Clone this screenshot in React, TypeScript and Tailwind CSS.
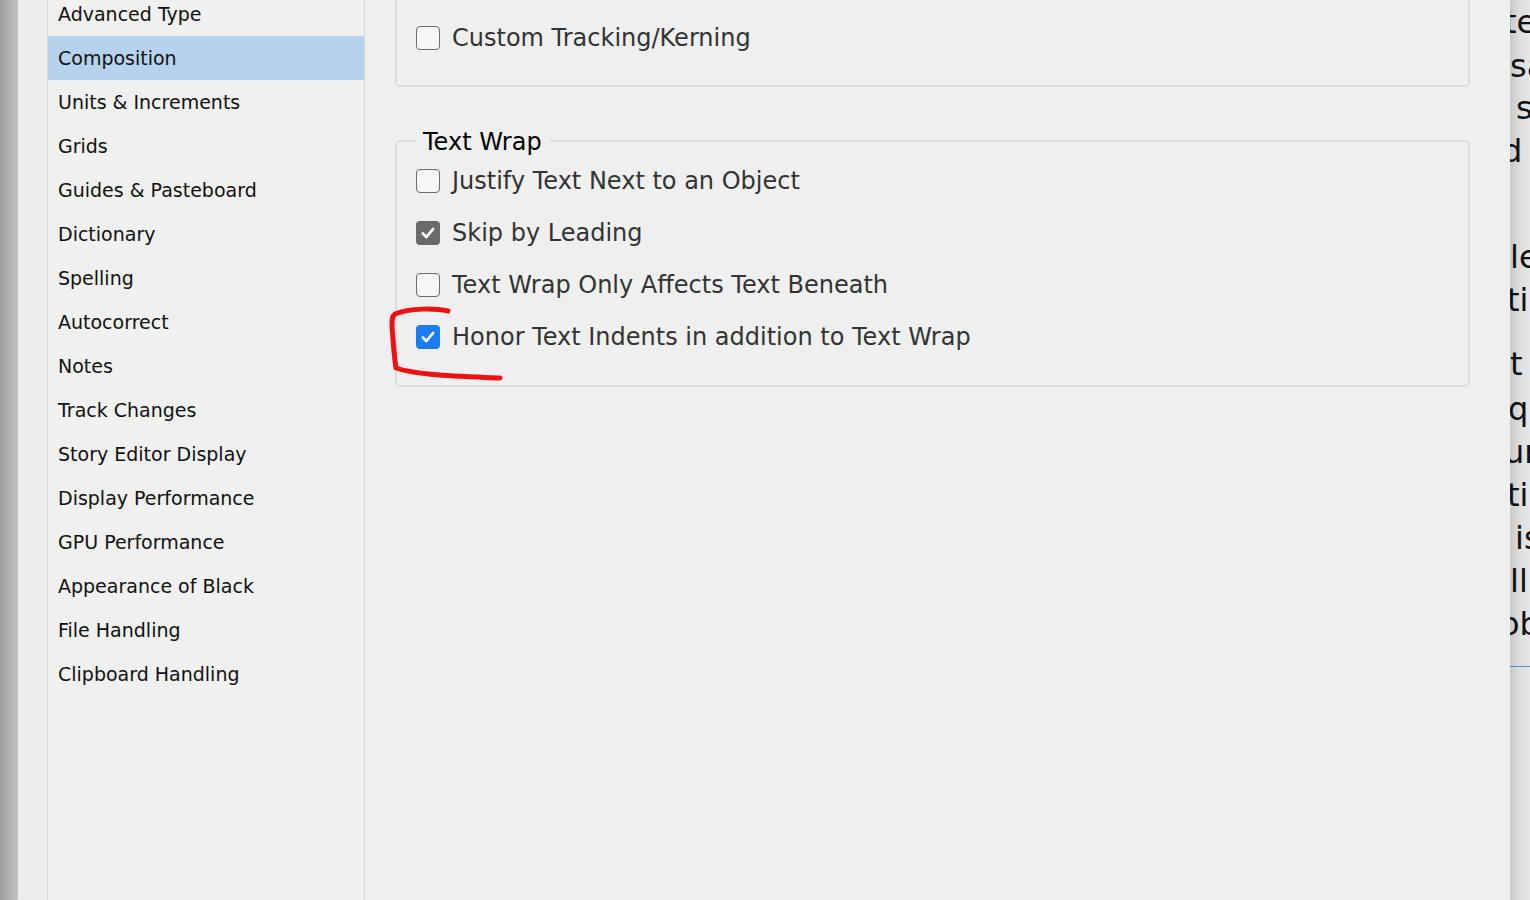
import type { ReactNode } from "react";

const items = [
  "Advanced Type",
  "Composition",
  "Units & Increments",
  "Grids",
  "Guides & Pasteboard",
  "Dictionary",
  "Spelling",
  "Autocorrect",
  "Notes",
  "Track Changes",
  "Story Editor Display",
  "Display Performance",
  "GPU Performance",
  "Appearance of Black",
  "File Handling",
  "Clipboard Handling",
];

// fragments of the document text peeking out behind the dialog
const peek: { t: string; ml: string; h: string }[] = [
  { t: "te", ml: "-ml-[6px]", h: "h-[44px]" },
  { t: "sa", ml: "ml-0", h: "h-[43px]" },
  { t: "s", ml: "ml-[6px]", h: "h-[42px]" },
  { t: "d", ml: "-ml-[8px]", h: "h-[43px]" },
  { t: "", ml: "ml-0", h: "h-[63px]" },
  { t: "le", ml: "ml-0", h: "h-[44px]" },
  { t: "ti", ml: "-ml-[3px]", h: "h-[42px]" },
  { t: "", ml: "ml-0", h: "h-[19px]" },
  { t: "t", ml: "ml-0", h: "h-[48px]" },
  { t: "qu", ml: "-ml-[2px]", h: "h-[42px]" },
  { t: "ur", ml: "-ml-[6px]", h: "h-[43px]" },
  { t: "ti", ml: "-ml-[3px]", h: "h-[43px]" },
  { t: "is", ml: "ml-[5px]", h: "h-[43px]" },
  { t: "ll", ml: "ml-0", h: "h-[43px]" },
  { t: "ob", ml: "-ml-[10px]", h: "h-[44px]" },
];

function Check({ state }: { state: "off" | "gray" | "blue" }) {
  if (state === "off") {
    return <span className="w-[24px] h-[24px] rounded-[4px] border-[1.5px] border-[#6e6e6e] bg-[#f6f6f6] shrink-0" />;
  }
  return (
    <span
      className={`w-[24px] h-[24px] rounded-[4px] shrink-0 flex items-center justify-center ${
        state === "gray" ? "bg-[#6a6a6a]" : "bg-[#1b7cf2]"
      }`}
    >
      <svg width="18" height="18" viewBox="0 0 16 16" fill="none">
        <path d="M3.4 8.4 L6.5 11.6 L12.6 4.4" stroke="white" strokeWidth="2.4" strokeLinecap="round" strokeLinejoin="round" />
      </svg>
    </span>
  );
}

function Row({ state, children }: { state: "off" | "gray" | "blue"; children: ReactNode }) {
  return (
    <div className="h-[52px] flex items-center gap-[12px] pl-[19px]">
      <Check state={state} />
      <span className="text-[24px] text-[#333333]">{children}</span>
    </div>
  );
}

export default function App() {
  return (
    <div
      className="w-[1530px] h-[900px] overflow-hidden flex bg-[#efefef]"
      style={{ fontFamily: '"DejaVu Sans", "Noto Sans", sans-serif' }}
    >
      <div className="w-[18px] h-full bg-gradient-to-r from-[#9c9c9c] to-[#c4c4c4]" />
      <div className="w-[29px] h-full bg-[#ededed]" />

      {/* category list */}
      <div className="w-[318px] h-full border-x border-[#d9d9d9] bg-[#f0f0f0] overflow-hidden">
        <div className="-mt-[8px]">
          {items.map((it) => (
            <div
              key={it}
              className={`h-[44px] flex items-center pl-[10px] text-[19px] text-[#111111] ${
                it === "Composition" ? "bg-[#b6d2ef]" : ""
              }`}
            >
              {it}
            </div>
          ))}
        </div>
      </div>

      {/* settings */}
      <div className="relative flex-1 h-full pl-[30px] pr-[40px]">
        <div className="-mt-[20px] h-[107px] border-2 border-[#dddddd] rounded-[5px] pt-[30px]">
          <Row state="off">Custom Tracking/Kerning</Row>
        </div>

        <div className="relative mt-[53px] h-[247px] border-2 border-[#dddddd] rounded-[5px] pt-[13px]">
          <span className="absolute -top-[18px] left-[18px] px-[8px] bg-[#efefef] text-[24px] text-black">
            Text Wrap
          </span>
          <Row state="off">Justify Text Next to an Object</Row>
          <Row state="gray">Skip by Leading</Row>
          <Row state="off">Text Wrap Only Affects Text Beneath</Row>
          <Row state="blue">Honor Text Indents in addition to Text Wrap</Row>
        </div>

        <svg className="absolute left-0 top-0 pointer-events-none" width="160" height="400">
          <path
            d="M83 311 C70 308 45 308 30 314 C27 316 27 320 27 326 C28 340 29 355 31 368 C50 375 90 376 135 378"
            stroke="#ee1111"
            strokeWidth="5"
            fill="none"
            strokeLinecap="round"
            strokeLinejoin="round"
          />
        </svg>
      </div>

      {/* document behind */}
      <div className="w-[20px] h-full overflow-hidden bg-gradient-to-r from-[#c9c9c9] via-[#dedede] to-[#e6e6e6] flex flex-col">
        {peek.map((p, i) => (
          <div
            key={i}
            className={`${p.h} ${p.ml} shrink-0 flex items-center whitespace-nowrap text-[32px] text-[#111111] leading-none`}
          >
            {p.t}
          </div>
        ))}
        <div className="h-px bg-[#4f8fd6] mt-[20px] shrink-0" />
      </div>
    </div>
  );
}
